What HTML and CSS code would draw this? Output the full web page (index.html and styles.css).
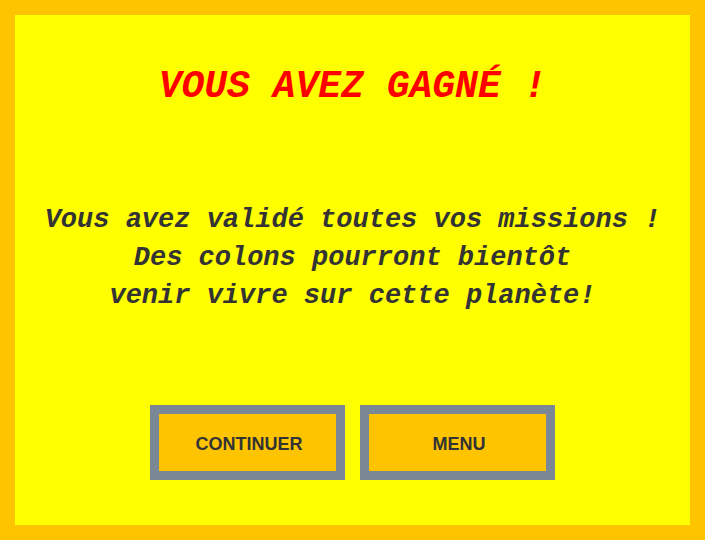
FILE: index.html
```html
<!DOCTYPE html>
<html lang="fr">
<head>
<meta charset="utf-8">
<link rel="stylesheet" href="styles.css">
</head>
<body>
<div class="screen">
  <h1 class="title">VOUS AVEZ GAGNÉ !</h1>
  <p class="message">Vous avez validé toutes vos missions !<br>Des colons pourront bientôt<br>venir vivre sur cette planète!</p>
  <div class="actions">
    <button class="btn">CONTINUER</button>
    <button class="btn">MENU</button>
  </div>
</div>
</body>
</html>
```
FILE: styles.css
```css
html, body {
  margin: 0;
  padding: 0;
}
body {
  width: 705px;
  height: 540px;
  overflow: hidden;
}
.screen {
  box-sizing: border-box;
  width: 705px;
  height: 540px;
  border: 15px solid #ffc400;
  background: #ffff00;
  display: flex;
  flex-direction: column;
  align-items: center;
  padding-top: 50px;
}
.title {
  margin: 0;
  font-family: "Courier New", "Nimbus Mono PS", "FreeMono", "Liberation Mono", monospace;
  font-style: italic;
  font-weight: bold;
  font-size: 38px;
  line-height: 44px;
  color: #ff0000;
  text-align: center;
}
.message {
  margin: 92px 0 0;
  font-family: "Courier New", "Nimbus Mono PS", "FreeMono", "Liberation Mono", monospace;
  font-style: italic;
  font-weight: bold;
  font-size: 27px;
  line-height: 38px;
  color: #333333;
  text-align: center;
}
.actions {
  margin-top: 90px;
  display: flex;
  gap: 15px;
}
.btn {
  box-sizing: border-box;
  width: 195px;
  height: 75px;
  border: 9px solid #7a8896;
  background: #ffc400;
  font-family: "Liberation Sans", Arial, sans-serif;
  font-weight: bold;
  font-size: 18px;
  color: #333333;
  padding: 3px 0 0 3px;
  cursor: pointer;
}
```
